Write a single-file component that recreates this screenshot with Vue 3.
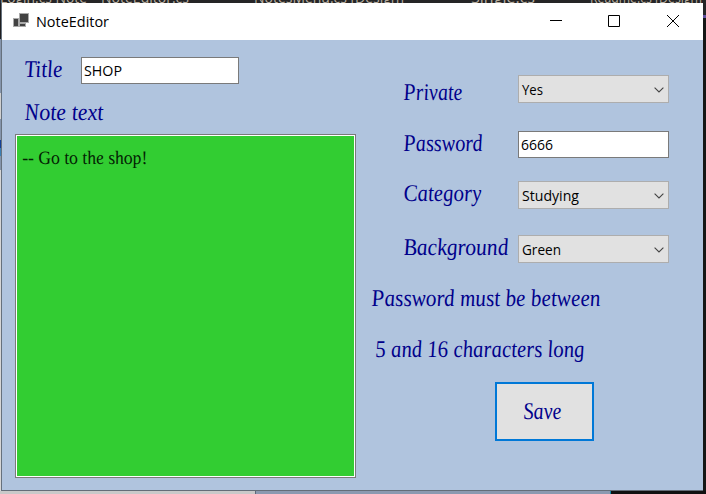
<script setup>
import { h } from 'vue'

// Single line of text fitted to a fixed width, with its baseline 22px down
const FitText = (props) =>
  h('svg', { width: props.w, height: 30, overflow: 'visible' }, [
    h(
      'text',
      {
        transform: `translate(${props.skew ? 1 : 0} 22) skewX(${props.skew || 0})`,
        textLength: props.w,
        lengthAdjust: 'spacingAndGlyphs',
      },
      props.text,
    ),
  ])
FitText.props = ['text', 'w', 'skew']

const fields = [
  { label: 'Private', w: 59, value: 'Yes', vw: 21, kind: 'select' },
  { label: 'Password', w: 79, value: '6666', vw: 32, kind: 'input' },
  { label: 'Category', w: 78, value: 'Studying', vw: 57, kind: 'select' },
  { label: 'Background', w: 105, value: 'Green', vw: 39, kind: 'select' },
]
const tabs = [
  { text: 'Login.cs   Note', w: 87 },
  { text: 'NoteEditor.cs', w: 88 },
  { text: 'NotesMenu.cs [Design]', w: 150 },
  { text: 'Single.cs', w: 64 },
  { text: 'Readme.cs [Design]', w: 112 },
]
</script>

<template>
  <div class="desktop">
    <div class="tabs">
      <FitText v-for="(t, i) in tabs" :key="i" class="tab" :class="'t' + i" :text="t.text" :w="t.w" />
    </div>
    <div class="edge-left"></div>
    <main class="window">
      <header class="titlebar">
        <svg class="app-icon" width="17" height="16">
          <rect x="6.5" y=".5" width="9" height="9" fill="#424242" stroke="#aaa" />
          <rect x=".5" y="5.5" width="5" height="8" fill="#424242" stroke="#aaa" />
          <rect x="6.5" y="10.5" width="6" height="3" fill="#424242" stroke="#aaa" />
        </svg>
        <FitText class="ui caption" text="NoteEditor" :w="73" />
        <svg class="controls" width="130" height="14" fill="none" stroke="#000">
          <path d="M0 6.5H12M58.5 1.5h11v11h-11zM117 1L129 13M129 1L117 13" />
        </svg>
      </header>
      <div class="body">
        <section class="left">
          <div class="title-row">
            <FitText class="script" text="Title" :w="38" :skew="5" />
            <div class="box title-input"><FitText class="ui" text="SHOP" :w="38" /></div>
          </div>
          <FitText class="script note-label" text="Note text" :w="79" :skew="5" />
          <div class="note"><FitText class="script note-text" text="-- Go to the shop!" :w="125" :skew="9" /></div>
        </section>
        <section class="right">
          <div v-for="f in fields" :key="f.label" class="row" :class="f.label.toLowerCase()">
            <FitText class="script" :text="f.label" :w="f.w" :skew="5" />
            <div class="box" :class="f.kind">
              <FitText class="ui" :text="f.value" :w="f.vw" />
              <svg v-if="f.kind === 'select'" class="chevron" width="10" height="6" fill="none" stroke="#444">
                <path d="M.6 .6L5 5L9.4 .6" stroke-width="1.1" />
              </svg>
            </div>
          </div>
          <FitText class="script hint" text="Password must be between" :w="229" :skew="5" />
          <FitText class="script hint second" text="5 and 16 characters long" :w="209" :skew="5" />
          <button class="save"><FitText class="script" text="Save" :w="38" :skew="5" /></button>
        </section>
      </div>
    </main>
    <div class="edge-right"></div>
    <div class="edge-bottom"></div>
  </div>
</template>

<style>
body { overflow: hidden; }
</style>
<style scoped>
.desktop { width: 706px; height: 494px; display: grid; grid-template: 3px 488px 3px / 2px 701px 3px; overflow: hidden; }
.desktop * { box-sizing: border-box; }
svg { display: block; flex: none; }
.tabs { grid-column: 1 / 4; background: #252526; display: flex; overflow: hidden; }
.tab { font: 14px "Open Sans", sans-serif; fill: #b9b0a2; margin-top: -19px; }
.t1 { margin-left: 14px; }
.t2 { margin-left: 65px; }
.t3 { margin-left: 67px; }
.t4 { margin-left: 55px; }
.edge-left { background: linear-gradient(90deg, transparent 1px, #66717d 1px), linear-gradient(#1d1d1f 0 36px, #8595ac 36px 90px, #d0d0d0 90px 116px, #8595ac 116px 137px, #123f98 137px 145px, #3a7fb5 145px 153px, #8595ac 153px 167px, #d6d6d6 167px); }
.edge-right { background: linear-gradient(#252526 0 12px, #6050a0 12px 15px, #151716 15px); }
.edge-bottom { grid-column: 1 / 4; background: linear-gradient(90deg, #c9c9c9 0 255px, #5d6777 255px 256px, #8b99b0 256px 610px, #168aaa 610px 611px, #111 611px); }
.window { display: flex; flex-direction: column; background: #b0c4de; border-bottom: 1px solid #646d78; }
.titlebar { height: 37px; background: #fff; display: flex; align-items: flex-start; flex: none; }
.app-icon { margin: 10px 0 0 11px; }
.ui { font: 15px "Open Sans", sans-serif; fill: #000; }
.caption { margin: 2px 0 0 6px; font-size: 14.5px; }
.controls { margin: 11px 0 0 441px; }
.body { display: flex; flex: 1; min-height: 0; }
.left { width: 367px; padding: 15px 0 0 13px; flex: none; }
.title-row { display: flex; padding-left: 9px; height: 43px; }
.script { font: italic 24px "Liberation Serif", serif; fill: #00008b; }
.box { display: flex; width: 151px; flex: none; border: 1px solid #7a7a7a; background: #fff; height: 27px; }
.title-input { width: 158px; margin: 2px 0 0 19px; padding-left: 2px; }
.box .ui { margin-top: -4px; }
.note-label { margin-left: 9px; }
.note { margin-top: 6px; width: 341px; height: 344px; border: 1px solid #7a7a7a; background: #32cd32; box-shadow: inset 0 0 0 1px #fff; padding: 7px 0 0 6px; }
.note-text { font-size: 19px; fill: #032103; }
.right { width: 300px; display: flex; flex-direction: column; }
.row { display: flex; justify-content: space-between; padding-left: 34px; height: 30px; flex: none; align-items: flex-start; }
.private { margin-top: 38px; }
.password { margin-top: 21px; }
.category { margin-top: 20px; }
.background { margin-top: 24px; }
.input { margin-top: 2px; padding-left: 2px; }
.select { height: 28px; background: #e1e1e1; border-color: #adadad; padding-left: 3px; justify-content: space-between; margin-top: 2px; }
.private .select { margin-top: -3px; }
.select .ui { margin-top: -3px; }
.row > .script { flex: none; }
.chevron { margin: 11px 4px 0 0; }
.hint { margin: 21px 0 0 2px; }
.second { margin-left: 6px; }
.save { width: 99px; height: 59px; margin: 17px 0 0 126px; padding: 13px 0 0 26px; border: 2px solid #0078d7; border-radius: 0; background: #e1e1e1; display: flex; align-items: flex-start; }
</style>
